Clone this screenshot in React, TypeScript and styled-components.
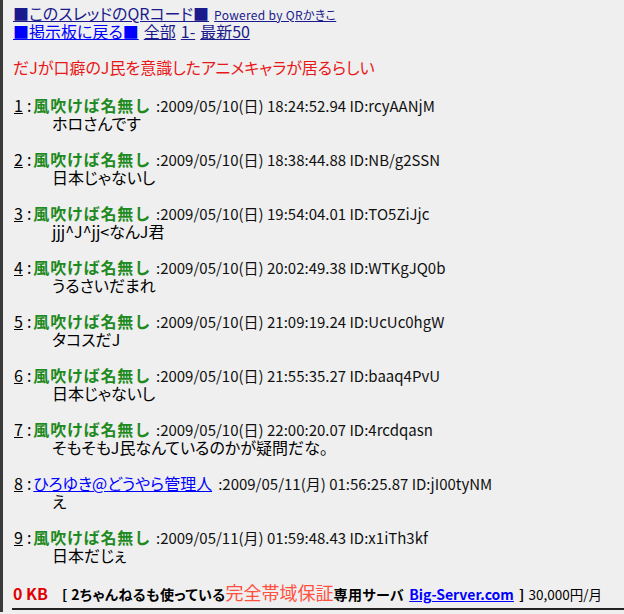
import React from "react";
import styled, { createGlobalStyle } from "styled-components";

const GlobalStyle = createGlobalStyle`
	html, body {
		margin: 0;
		padding: 0;
		background: #efefef;
	}

	body {
		font-family: "Noto Sans CJK JP", "Liberation Sans", sans-serif;
		font-feature-settings: "palt";
		font-size: 16px;
		color: #000;
	}
`;

const Page = styled.div`
	border-left: 3px solid #3a3a3a;
	padding: 4px 0 2px 10px;
`;

const NavLine = styled.div`
	line-height: 18px;
	height: 18px;
	white-space: nowrap;
`;

const NavLink = styled.a<{ $visited?: boolean; $small?: boolean }>`
	color: ${(p) => (p.$visited ? "#1a1a8c" : "#0000ff")};
	font-size: ${(p) => (p.$small ? "12px" : "16px")};
	letter-spacing: ${(p) => (p.$small ? "0.3px" : "0")};
	text-decoration: underline;
	margin-right: ${(p) => (p.$small ? "0" : "5px")};
`;

const Title = styled.h1`
	margin: 18px 0 20px;
	font-size: 16px;
	font-weight: normal;
	line-height: 18px;
	color: #e81818;
`;

const Thread = styled.dl`
	margin: 0;
`;

const PostHead = styled.dt`
	line-height: 18px;
	height: 18px;
	white-space: nowrap;
`;

const PostNum = styled.a`
	color: #000;
	text-decoration: underline;
	margin: 0 4px 0 1px;
`;

const Name = styled.b`
	color: #1f8a1f;
	font-feature-settings: normal;
	letter-spacing: 0.8px;
	margin: 0 5px 0 2px;
`;

const AdminName = styled.a`
	color: #0000ff;
	text-decoration: underline;
	margin: 0 6px 0 2px;
`;

const Meta = styled.span`
	color: #111;
	font-size: 15px;
`;

const PostBody = styled.dd`
	margin: 0 0 18px 39px;
	line-height: 18px;
	height: 18px;
`;

const Footer = styled.div`
	display: flex;
	align-items: baseline;
	height: 20px;
	line-height: 20px;
	padding-bottom: 6px;
	margin-left: -1px;
	padding-left: 1px;
	border-bottom: 2px solid #222;
	white-space: nowrap;
	font-size: 14px;
`;

const Size = styled.b`
	color: #e00000;
	font-size: 16px;
	margin-right: 14px;
`;

const Bold = styled.b`
	font-size: 14px;
	letter-spacing: 0.4px;
`;

const Guarantee = styled.span`
	color: #ff5040;
	font-size: 18px;
`;

const AdLink = styled.a`
	color: #0000ff;
	font-weight: bold;
	font-size: 14px;
	margin: 0 5px;
`;

const Price = styled.span`
	margin-left: 4px;
	font-size: 13.5px;
`;

type Post = {
	no: number;
	name: string;
	admin?: boolean;
	date: string;
	id: string;
	body: string;
};

const posts: Post[] = [
	{ no: 1, name: "風吹けば名無し", date: "2009/05/10(日) 18:24:52.94", id: "rcyAANjM", body: "ホロさんです" },
	{ no: 2, name: "風吹けば名無し", date: "2009/05/10(日) 18:38:44.88", id: "NB/g2SSN", body: "日本じゃないし" },
	{ no: 3, name: "風吹けば名無し", date: "2009/05/10(日) 19:54:04.01", id: "TO5ZiJjc", body: "jjj^J^jj<なんJ君" },
	{ no: 4, name: "風吹けば名無し", date: "2009/05/10(日) 20:02:49.38", id: "WTKgJQ0b", body: "うるさいだまれ" },
	{ no: 5, name: "風吹けば名無し", date: "2009/05/10(日) 21:09:19.24", id: "UcUc0hgW", body: "タコスだJ" },
	{ no: 6, name: "風吹けば名無し", date: "2009/05/10(日) 21:55:35.27", id: "baaq4PvU", body: "日本じゃないし" },
	{ no: 7, name: "風吹けば名無し", date: "2009/05/10(日) 22:00:20.07", id: "4rcdqasn", body: "そもそもJ民なんているのかが疑問だな。" },
	{ no: 8, name: "ひろゆき@どうやら管理人", admin: true, date: "2009/05/11(月) 01:56:25.87", id: "jI00tyNM", body: "え" },
	{ no: 9, name: "風吹けば名無し", date: "2009/05/11(月) 01:59:48.43", id: "x1iTh3kf", body: "日本だじぇ" },
];

const App = () => {
	return (
		<>
			<GlobalStyle />
			<Page>
				<NavLine>
					<NavLink href="#" $visited>■このスレッドのQRコード■</NavLink>
					<NavLink href="#" $visited $small>Powered by QRかきこ</NavLink>
				</NavLine>
				<NavLine>
					<NavLink href="#">■掲示板に戻る■</NavLink>
					<NavLink href="#" $visited>全部</NavLink>
					<NavLink href="#" $visited>1-</NavLink>
					<NavLink href="#" $visited>最新50</NavLink>
				</NavLine>
				<Title>だJが口癖のJ民を意識したアニメキャラが居るらしい</Title>
				<Thread>
					{posts.map((post) => (
						<React.Fragment key={post.no}>
							<PostHead>
								<PostNum href="#">{post.no}</PostNum>:
								{post.admin ? <AdminName href="#">{post.name}</AdminName> : <Name>{post.name}</Name>}
								<Meta>
									:{post.date} ID:{post.id}
								</Meta>
							</PostHead>
							<PostBody>{post.body}</PostBody>
						</React.Fragment>
					))}
				</Thread>
				<Footer>
					<Size>0 KB</Size>
					<Bold>[ 2ちゃんねるも使っている</Bold>
					<Guarantee>完全帯域保証</Guarantee>
					<Bold>専用サーバ</Bold>
					<AdLink href="#">Big-Server.com</AdLink>
					<Bold>]</Bold>
					<Price>30,000円/月</Price>
				</Footer>
			</Page>
		</>
	);
};

export default App;
